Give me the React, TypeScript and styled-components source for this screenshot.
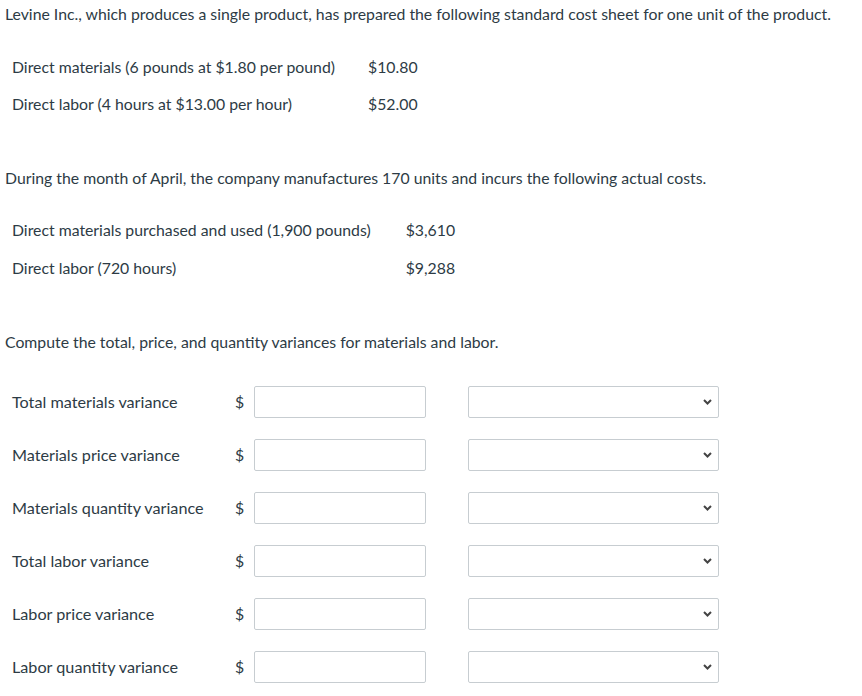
import React from "react";
import styled, { createGlobalStyle } from "styled-components";

const Global = createGlobalStyle`
  html, body { margin: 0; padding: 0; background: #ffffff; }
  body { font-family: Lato, "Open Sans", sans-serif; color: #2d3b45; font-size: 15.8px; }
`;

const Page = styled.div`
  padding: 4px 0 0 5px;
  width: 857px;
  box-sizing: border-box;
`;

const Para = styled.p<{ $top: number }>`
  margin: ${(p) => p.$top}px 0 0 0;
  line-height: 20px;
`;

const CostTable = styled.div<{ $top: number; $gap: number; $rowGap: number }>`
  margin: ${(p) => p.$top}px 0 0 7px;
  display: grid;
  grid-template-columns: max-content max-content;
  column-gap: ${(p) => p.$gap}px;
  row-gap: ${(p) => p.$rowGap}px;
  line-height: 20px;
`;

const Cell = styled.div``;

const AnswerGrid = styled.div`
  margin: 34px 0 0 7px;
  display: grid;
  grid-template-columns: 222px 20px 172px 251px;
  row-gap: 21px;
  align-items: center;
`;

const Label = styled.div`
  line-height: 20px;
  font-size: 16.2px;
`;

const Dollar = styled.div`
  line-height: 20px;
  padding-left: 1px;
`;

const AmountInput = styled.input`
  box-sizing: border-box;
  width: 172px;
  height: 32px;
  border: 1px solid #c7cdd1;
  border-radius: 2px;
  background: #fff;
  margin: 0;
  padding: 0 6px;
  font: inherit;
`;

const SelectBox = styled.div`
  box-sizing: border-box;
  margin-left: 42px;
  width: 251px;
  height: 32px;
  border: 1px solid #c7cdd1;
  border-radius: 2px;
  background: #fff;
  display: flex;
  align-items: center;
  justify-content: flex-end;
  padding-right: 6px;
`;

const Chevron = () => (
  <svg width="9" height="6" viewBox="0 0 9 6" aria-hidden="true">
    <path d="M1 1 L4.5 4.5 L8 1" fill="none" stroke="#444" strokeWidth="2" />
  </svg>
);

const rows = [
  "Total materials variance",
  "Materials price variance",
  "Materials quantity variance",
  "Total labor variance",
  "Labor price variance",
  "Labor quantity variance",
];

export default function App() {
  return (
    <Page>
      <Global />
      <Para $top={0}>
        Levine Inc., which produces a single product, has prepared the following standard cost sheet for one unit of the product.
      </Para>
      <CostTable $top={33} $gap={33} $rowGap={17}>
        <Cell>Direct materials (6 pounds at $1.80 per pound)</Cell>
        <Cell>$10.80</Cell>
        <Cell>Direct labor (4 hours at $13.00 per hour)</Cell>
        <Cell>$52.00</Cell>
      </CostTable>
      <Para $top={54}>
        During the month of April, the company manufactures 170 units and incurs the following actual costs.
      </Para>
      <CostTable $top={32} $gap={35} $rowGap={18}>
        <Cell>Direct materials purchased and used (1,900 pounds)</Cell>
        <Cell>$3,610</Cell>
        <Cell>Direct labor (720 hours)</Cell>
        <Cell>$9,288</Cell>
      </CostTable>
      <Para $top={54}>Compute the total, price, and quantity variances for materials and labor.</Para>
      <AnswerGrid>
        {rows.map((r) => (
          <React.Fragment key={r}>
            <Label>{r}</Label>
            <Dollar>$</Dollar>
            <AmountInput type="text" aria-label={r} />
            <SelectBox>
              <Chevron />
            </SelectBox>
          </React.Fragment>
        ))}
      </AnswerGrid>
    </Page>
  );
}
